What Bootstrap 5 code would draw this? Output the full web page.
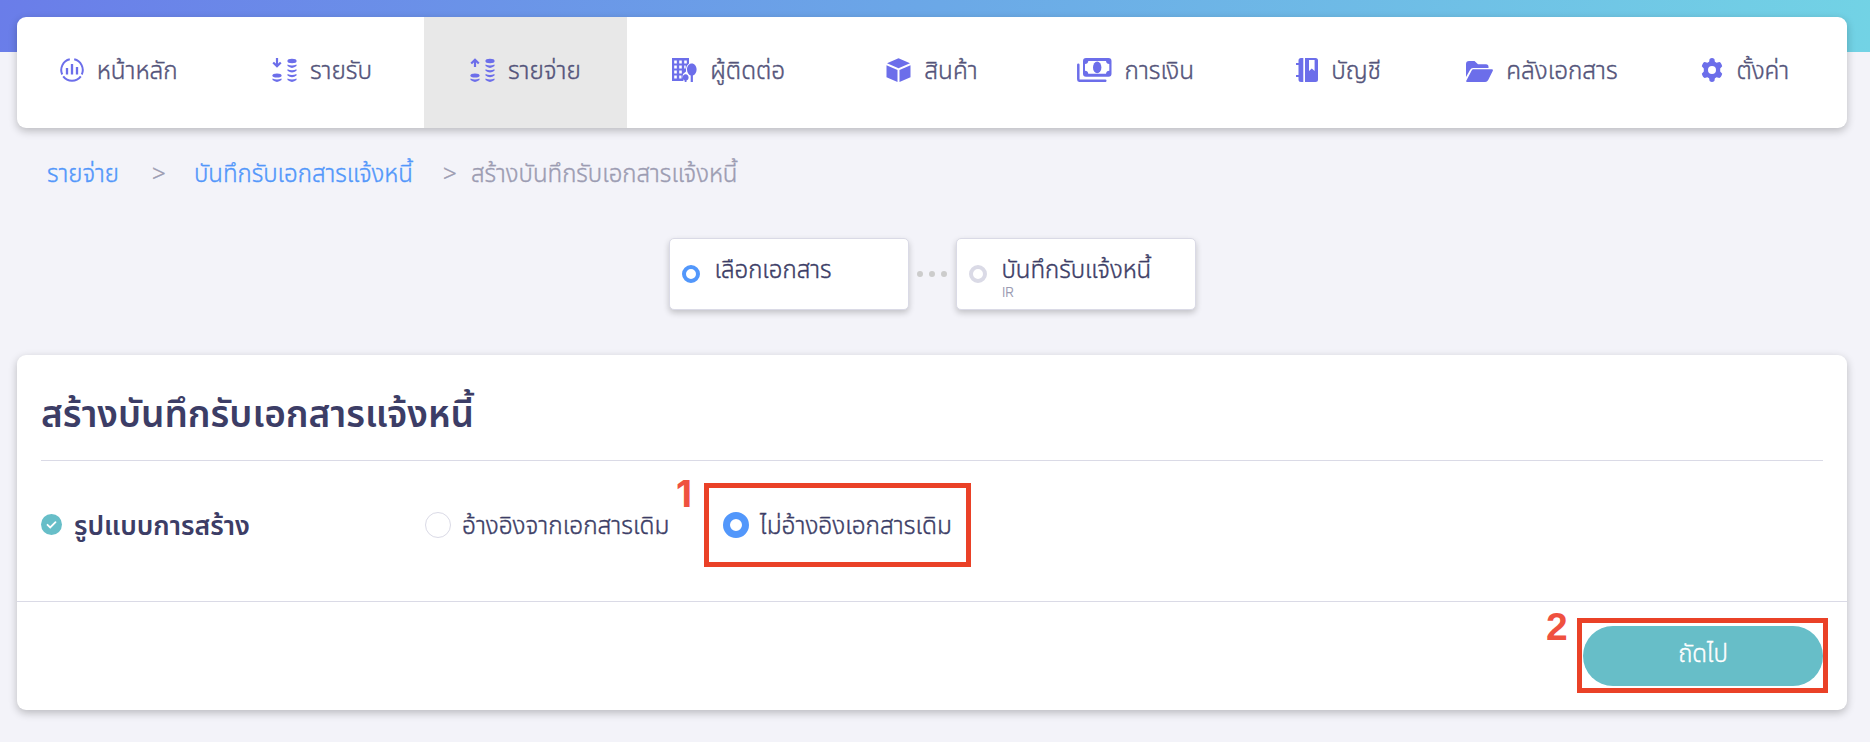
<!DOCTYPE html>
<html lang="th">
<head>
<meta charset="utf-8">
<meta name="viewport" content="width=device-width, initial-scale=1">
<title>สร้างบันทึกรับเอกสารแจ้งหนี้</title>
<link href="https://cdn.jsdelivr.net/npm/bootstrap@5.3.0/dist/css/bootstrap.min.css" rel="stylesheet">
<style>
:root{--ink:#3c3d66;--ink2:#54547a;--violet:#6c6eea;--blue:#5297fb;--teal:#67bec8;--line:#dadae6;--mute:#9c9cb2;--red:#ea4127}
body{background:#f3f3f9 linear-gradient(100deg,#6a7de9,#6ba8e7 50%,#72d3e5) no-repeat 0 0/100% 52px;color:var(--ink);font-family:"Noto Sans Thai","Liberation Sans",sans-serif;font-size:24px;font-weight:300;line-height:32px;padding:17px 23px 0 17px;min-height:742px}
.panel{background:#fff;border-radius:9px;box-shadow:0 3px 8px rgba(0,0,0,.24)}
.topnav{height:111px}
.topnav .nav-link{height:111px;color:var(--ink2);gap:13px;padding:0 0 1px}
.topnav .active{background:#e8e8e8}
.topnav svg{height:24px;fill:var(--violet);flex:none;margin-top:-5px}
.tx{display:block;white-space:nowrap;flex:none;-webkit-text-stroke:.4px currentColor}
.topnav .tx{font-size:24.300px}
h1 .tx,.lbl .tx{-webkit-text-stroke:0}
.crumbs{height:44px;margin:25px 0 0 30px;color:var(--mute)}
.crumbs a{color:var(--blue);text-decoration:none}
.c1{width:105px}
.c2{width:42px}
.c3{width:249px}
.c4{width:28px}
.steps{height:72px;margin:41px 0 0 0}
.step{width:240px;height:72px;border:1px solid var(--line);border-radius:5px;background:#fff;box-shadow:0 3px 6px rgba(0,0,0,.2);padding:17px 0 0 12px;gap:15px}
.step .tx{line-height:30px}
.ring{width:18px;height:18px;border:4.500px solid #dadae6;border-radius:50%;margin-top:9px;flex:none}
.ring.on{border-color:var(--blue)}
.dots{width:47px;gap:6px}
.dots i{width:6px;height:6px;border-radius:50%;background:#ccc}
.code{font:15px/12px "Liberation Sans",sans-serif;color:var(--mute);transform:scaleX(.8);transform-origin:0 0}
.main{height:355px;margin-top:45px}
.titlebar{height:106px;margin:0 24px;border-bottom:1px solid var(--line);padding-top:35px}
.titlebar h1{font-size:37px;font-weight:600;line-height:52px;margin:0}
.fields{height:141px;border-bottom:1px solid var(--line);padding:22px 0 0 24px}
.lbl{width:384px;height:84px;font-size:26.600px;font-weight:600;gap:12px}
.lbl svg{margin-top:-2px}
.lbl .tx,.opt .tx{padding-top:3px}
.opt{gap:11px;font-size:24.400px}
.opt .form-check-input{width:26px;height:26px;margin:0;border:1px solid var(--line)}
.opt .form-check-input:checked{background:#fff;border:7px solid var(--blue)}
.first{width:279px;height:84px;position:relative}
.frame{border:5px solid var(--red)}
.pick{width:267px;height:84px;padding-left:14px}
.num{position:absolute;font:bold 39px/38px "Liberation Sans",sans-serif;color:#ef513f}
.n1{left:251px;top:-8px;font-family:Inter,sans-serif;font-size:37px}
.foot{padding:16px 19px 0 0}
.go{width:251px;height:75px;padding:3px 0 0 1px;position:relative}
.go .btn{width:240px;height:60px;background:var(--teal);color:#fff;font-size:24px;font-weight:300;border:0;padding:0 0 2px;-webkit-text-stroke:.4px #fff}
.go .num{left:-36px;top:-15px}
</style>
</head>
<body>
<nav class="panel topnav">
<div class="nav nav-justified flex-nowrap h-100">
<a class="nav-link nav-item d-flex align-items-center justify-content-center" href="#"><svg width="24" viewBox="0 0 24 24"><g fill="none" stroke="#6c6eea" stroke-width="2"><path d="M9.800 1.300A11 11 0 0 0 2.200 16.500M14.200 1.300A11 11 0 0 1 21.800 16.500M3.200 18.300A11 11 0 0 0 20.800 18.300"/><path stroke-width="2.300" d="M7 10v6.500M12 6v10.500M17 9v7.500"/></g></svg><span class="tx">หน้าหลัก</span></a>
<a class="nav-link nav-item d-flex align-items-center justify-content-center" href="#"><svg width="25" viewBox="0 0 25 24"><path d="M5 0v8M1.200 4.500 5 8.300l3.800-3.800" fill="none" stroke="#6c6eea" stroke-width="2.200"/><ellipse cx="5" cy="17.500" rx="4.600" ry="2.100"/><ellipse cx="20" cy="3" rx="4.600" ry="2.200"/><path d="M.5 20.500q4.500 2.200 9 0v1.600q-4.500 3.600-9 0zM15.500 6.500q4.500 2.200 9 0v1.600q-4.500 3.600-9 0zM15.500 11.200q4.500 2.200 9 0v1.600q-4.500 3.600-9 0zM15.500 15.900q4.500 2.200 9 0v1.600q-4.500 3.600-9 0zM15.500 20.500q4.500 2.200 9 0v1.600q-4.500 3.600-9 0z"/></svg><span class="tx">รายรับ</span></a>
<a class="nav-link nav-item active d-flex align-items-center justify-content-center" href="#"><svg width="25" viewBox="0 0 25 24"><path d="M5 9V1.500M1.200 5.500 5 1.700l3.800 3.800" fill="none" stroke="#6c6eea" stroke-width="2.200"/><ellipse cx="5" cy="17.500" rx="4.600" ry="2.100"/><ellipse cx="20" cy="3" rx="4.600" ry="2.200"/><path d="M.5 20.500q4.500 2.200 9 0v1.600q-4.500 3.600-9 0zM15.500 6.500q4.500 2.200 9 0v1.600q-4.500 3.600-9 0zM15.500 11.200q4.500 2.200 9 0v1.600q-4.500 3.600-9 0zM15.500 15.900q4.500 2.200 9 0v1.600q-4.500 3.600-9 0zM15.500 20.500q4.500 2.200 9 0v1.600q-4.500 3.600-9 0z"/></svg><span class="tx">รายจ่าย</span></a>
<a class="nav-link nav-item d-flex align-items-center justify-content-center" href="#"><svg width="25" viewBox="0 0 25 24"><path fill-rule="evenodd" d="M0 0h17v5.500q-3.500 2.500-3 8-3 1.500-3.500 5l1 4.500H0zM2.200 2.500v3h2.600v-3zm5 0v3h2.600v-3zm5 0v3h2.600v-3zm-10 5v3h2.600v-3zm5 0v3h2.600v-3zm5 0v3h1.500v-3zm-10 5v3h2.600v-3zm5 0v3h2.600v-3zm-5 5v3h2.600v-3zm5 0v3h2.300v-3z"/><path d="M19.800 5.500c2.700 0 4.800 2.700 4.800 6 0 3-1.500 5.300-3.700 5.900V24h-2.200v-6.600c-2.200-.6-3.700-2.900-3.700-5.900 0-3.300 2.100-6 4.800-6z"/><path d="M13.600 16.200c1.800 0 3 1.500 3 3.400 0 1.500-.8 2.700-2.100 3V24h-1.800v-1.400c-1.300-.3-2.100-1.500-2.100-3 0-1.900 1.200-3.400 3-3.400z"/></svg><span class="tx">ผู้ติดต่อ</span></a>
<a class="nav-link nav-item d-flex align-items-center justify-content-center" href="#"><svg width="25" viewBox="0 0 25 24"><path d="M12.500.300 24 5.300l-11.500 5L1 5.300zM.5 7.200l11 4.900V24L.5 19.300zM24.500 7.200l-11 4.900V24l11-4.700z"/></svg><span class="tx">สินค้า</span></a>
<a class="nav-link nav-item d-flex align-items-center justify-content-center" href="#"><svg width="35" viewBox="0 0 35 24"><path fill-rule="evenodd" d="M9 0h22.500q3 0 3 3v12.700q0 3-3 3H9q-3 0-3-3V3q0-3 3-3zm2.300 3Q11 5.800 8 6v6.700q3 .2 3.300 3H29q.3-2.800 3.300-3V6q-3-.2-3.300-3z"/><ellipse cx="20.200" cy="9.400" rx="4.200" ry="5.800"/><path d="M1.300 6.700v14.500q0 1.600 1.600 1.600h25.400" fill="none" stroke="#6c6eea" stroke-width="2.500" stroke-linecap="round"/></svg><span class="tx">การเงิน</span></a>
<a class="nav-link nav-item d-flex align-items-center justify-content-center" href="#"><svg width="22" viewBox="0 0 22 24"><path d="M7.300 0v24H5q-2.500 0-2.500-2.500V19H0v-2h2.500V7H0V5h2.500V2.500Q2.500 0 5 0z"/><path fill-rule="evenodd" d="M9 0h10.500Q22 0 22 2.500v19q0 2.500-2.500 2.500H9zm4 2v11l2.800-2.400 2.800 2.400V2z"/></svg><span class="tx">บัญชี</span></a>
<a class="nav-link nav-item d-flex align-items-center justify-content-center" href="#"><svg width="27" viewBox="0 0 27 24"><path d="M0 19V6q0-3 3-3h5.500l3.500 3.300h8q2.500 0 2.500 2.500V10H7Q5 10 4 12zM7 11.300h18.800q1.700 0 .9 1.700l-4.500 9q-1 2-3 2H1.200q-1.700 0-.8-1.600l5-9.500q.6-1.600 1.600-1.600z"/></svg><span class="tx">คลังเอกสาร</span></a>
<a class="nav-link nav-item d-flex align-items-center justify-content-center" href="#"><svg width="22" viewBox="0 0 22 24"><path fill-rule="evenodd" d="M8.600 1Q11-.8 13.400 1l.5 2.700 1.700 1L18.300 4q1.800.3 2.900 4.200l-2 2.200v3.200l2 2.200q-1.100 3.900-2.900 4.200l-2.700-.7-1.700 1-.5 2.700q-2.400 1.800-4.800 0l-.5-2.700-1.700-1-2.700.7Q1.900 19.700.800 15.800l2-2.200v-3.200l-2-2.200Q1.900 4.300 3.700 4l2.700.7 1.700-1zM11 8a4 4 0 1 0 0 8 4 4 0 0 0 0-8z"/></svg><span class="tx">ตั้งค่า</span></a>
</div>
</nav>

<div class="crumbs d-flex align-items-center">
<a href="#" class="tx c1">รายจ่าย</a><span class="tx c2">&gt;</span><a href="#" class="tx c3">บันทึกรับเอกสารแจ้งหนี้</a><span class="tx c4">&gt;</span><span class="tx">สร้างบันทึกรับเอกสารแจ้งหนี้</span>
</div>

<div class="steps d-flex justify-content-center">
<div class="step d-flex align-items-start"><span class="ring on"></span><span class="tx">เลือกเอกสาร</span></div>
<div class="dots d-flex align-items-center justify-content-center"><i></i><i></i><i></i></div>
<div class="step d-flex align-items-start"><span class="ring"></span><div><span class="tx">บันทึกรับแจ้งหนี้</span><div class="code">IR</div></div></div>
</div>

<main class="panel main">
<div class="titlebar"><h1><span class="tx">สร้างบันทึกรับเอกสารแจ้งหนี้</span></h1></div>
<div class="fields d-flex">
<div class="lbl d-flex align-items-center"><svg width="21" height="21" viewBox="0 0 21 21"><circle cx="10.500" cy="10.500" r="10.500" fill="#67bec8"/><path d="m6.500 10.800 2.700 2.600 5.300-5.300" fill="none" stroke="#fff" stroke-width="1.800" stroke-linecap="round"/></svg><span class="tx">รูปแบบการสร้าง</span></div>
<div class="first"><label class="opt d-flex align-items-center h-100"><input class="form-check-input" type="radio" name="m"><span class="tx">อ้างอิงจากเอกสารเดิม</span></label><span class="num n1">1</span></div>
<label class="opt pick frame d-flex align-items-center"><input class="form-check-input" type="radio" name="m" checked><span class="tx">ไม่อ้างอิงเอกสารเดิม</span></label>
</div>
<div class="foot d-flex justify-content-end"><div class="go frame"><span class="num">2</span><button class="btn rounded-pill" type="button">ถัดไป</button></div></div>
</main>
<script src="https://cdn.jsdelivr.net/npm/bootstrap@5.3.0/dist/js/bootstrap.bundle.min.js"></script>
</body>
</html>
